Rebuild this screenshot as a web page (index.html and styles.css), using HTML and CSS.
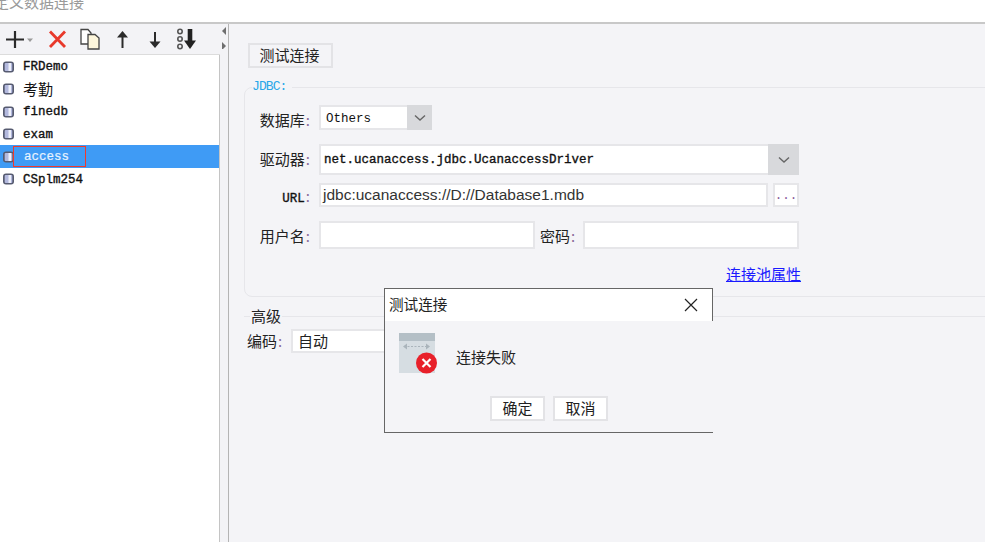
FILE: index.html
```html
<!DOCTYPE html>
<html lang="zh-CN">
<head>
<meta charset="utf-8">
<title>定义数据连接</title>
<link rel="stylesheet" href="styles.css">
</head>
<body>
<svg class="defs" width="0" height="0" aria-hidden="true">
  <symbol id="db" viewBox="0 0 11 12">
    <rect x="0" y="0.5" width="11" height="11" rx="3" fill="#565b70"/>
    <rect x="1.7" y="2" width="7.6" height="8" rx="1" fill="#b3b9de"/>
    <rect x="5.5" y="2" width="2.5" height="8" fill="#eef0fa"/>
  </symbol>
</svg>
<header class="titlebar"><span class="titletext">定义数据连接</span></header>
<main class="main">
  <aside class="sidebar">
    <div class="toolbar">
      <svg class="tools" width="204" height="24" viewBox="0 0 204 24">
        <path d="M6 11.5H24M15 3V20" stroke="#2b2b2b" stroke-width="2.2" fill="none"/>
        <path d="M27 10.5H33L30 14Z" fill="#9a9a9a"/>
        <path d="M50 3.5L65 19M65 3.5L50 19" stroke="#e8392b" stroke-width="2.8" fill="none"/>
        <path d="M81 1.5H88L91 5V16H81Z" fill="#fff" stroke="#444" stroke-width="1.3"/>
        <path d="M88 6.5H95L99 10V21H88Z" fill="#fdf6dc" stroke="#444" stroke-width="1.3"/>
        <path d="M122.5 20V6" stroke="#2b2b2b" stroke-width="2" fill="none"/>
        <path d="M117 9.5L122.5 3L128 9.5Z" fill="#2b2b2b"/>
        <path d="M155 4V17" stroke="#2b2b2b" stroke-width="2" fill="none"/>
        <path d="M149.5 13.5L155 20L160.5 13.5Z" fill="#2b2b2b"/>
        <circle cx="180" cy="3.5" r="2.2" fill="none" stroke="#555" stroke-width="1.6"/>
        <circle cx="180" cy="11" r="2.2" fill="none" stroke="#555" stroke-width="1.6"/>
        <circle cx="180" cy="18.5" r="2.2" fill="none" stroke="#555" stroke-width="1.6"/>
        <path d="M190 1V15" stroke="#222" stroke-width="4.6" fill="none"/>
        <path d="M184 12.5H196L190 21Z" fill="#222"/>
      </svg>
    </div>
    <ul class="list">
      <li class="item"><svg class="dbicon"><use href="#db"/></svg><span>FRDemo</span></li>
      <li class="item"><svg class="dbicon"><use href="#db"/></svg><span class="cjk">考勤</span></li>
      <li class="item"><svg class="dbicon"><use href="#db"/></svg><span>finedb</span></li>
      <li class="item"><svg class="dbicon"><use href="#db"/></svg><span>exam</span></li>
      <li class="item selected"><svg class="dbicon"><use href="#db"/></svg><span class="focus">access</span></li>
      <li class="item"><svg class="dbicon"><use href="#db"/></svg><span>CSplm254</span></li>
    </ul>
  </aside>
  <div class="splitter">
    <svg width="8" height="24" viewBox="0 0 8 24"><path d="M6 2V10L2 6Z" fill="#6f6f6f"/><path d="M2 17V25L6 21Z" fill="#6f6f6f"/></svg>
  </div>
  <section class="content">
    <button class="btn test">测试连接</button>
    <fieldset class="jdbc">
      <legend class="jdbc-legend">JDBC:</legend>
      <div class="row row-db">
        <label class="label label-db">数据库<i>:</i></label>
        <div class="combo combo-db"><span class="value mono drop">Others</span><span class="arrow"><svg width="14" height="8" viewBox="0 0 14 8"><path d="M2 1.5L7 6L12 1.5" stroke="#666" stroke-width="1.4" fill="none"/></svg></span></div>
      </div>
      <div class="row row-driver">
        <label class="label label-driver">驱动器<i>:</i></label>
        <div class="combo combo-driver"><span class="value mono strong">net.ucanaccess.jdbc.UcanaccessDriver</span><span class="arrow arrow-wide"><svg width="14" height="8" viewBox="0 0 14 8"><path d="M2 1.5L7 6L12 1.5" stroke="#666" stroke-width="1.4" fill="none"/></svg></span></div>
      </div>
      <div class="row row-url">
        <label class="label"><span class="mono strong">URL</span><i>:</i></label>
        <div class="input input-url"><span class="sans">jdbc:ucanaccess://D://Database1.mdb</span></div>
        <div class="input dots">...</div>
      </div>
      <div class="row row-user">
        <label class="label">用户名<i>:</i></label>
        <div class="input input-half"></div>
        <label class="label-inline">密码<i>:</i></label>
        <div class="input input-half"></div>
      </div>
      <div class="linkrow"><a class="link" href="#">连接池属性</a></div>
    </fieldset>
    <fieldset class="advanced">
      <legend class="adv-legend">高级</legend>
      <div class="row row-enc">
        <label class="label-inline">编码<i>:</i></label>
        <div class="input input-enc"><span class="enc-value">自动</span></div>
      </div>
    </fieldset>
  </section>
</main>
<div class="dialog">
  <div class="dialog-title"><span class="dialog-caption">测试连接</span>
    <svg width="14" height="14" viewBox="0 0 14 14"><path d="M1 1L13 13M13 1L1 13" stroke="#222" stroke-width="1.2" fill="none"/></svg>
  </div>
  <div class="dialog-body">
    <div class="message">
      <svg width="39" height="42" viewBox="0 0 39 42">
        <rect x="0" y="0" width="36" height="40" fill="#d6dde2"/>
        <rect x="0" y="0" width="36" height="8" fill="#b4bfc6"/>
        <path d="M5 13.5H30" stroke="#aab4bb" stroke-width="1.2" stroke-dasharray="2 1.5"/>
        <path d="M8 10.5L4 13.5L8 16.5ZM27 10.5L31 13.5L27 16.5Z" fill="#aab4bb"/>
        <circle cx="27.5" cy="30" r="10.5" fill="#e8202a"/>
        <path d="M23.5 26L31.5 34M31.5 26L23.5 34" stroke="#fff" stroke-width="2.2"/>
      </svg>
      <span class="message-text">连接失败</span>
    </div>
    <div class="actions">
      <button class="btn dlg">确定</button>
      <button class="btn dlg">取消</button>
    </div>
  </div>
</div>
</body>
</html>
```
FILE: styles.css
```css
* { box-sizing: border-box; }
html, body { margin: 0; height: 542px; overflow: hidden; }
body {
  background: #fff;
  color: #222;
  font-family: "Noto Sans CJK SC", "Liberation Sans", sans-serif;
  font-size: 15px;
  display: flex;
  flex-direction: column;
  position: relative;
}
.defs { position: absolute; }
.titlebar {
  height: 24px;
  flex: none;
  background: #fff;
  border-bottom: 2px solid #c8c8c8;
  overflow: hidden;
}
.titletext {
  display: block;
  margin: -8px 0 0 -6px;
  line-height: 20px;
  color: #9a9a9a;
  font-size: 15px;
}
.main { flex: 1; display: flex; min-height: 0; }
.sidebar {
  width: 220px;
  flex: none;
  display: flex;
  flex-direction: column;
  background: #fff;
  border-right: 1px solid #c4c4c4;
}
.toolbar {
  height: 31px;
  flex: none;
  background: #f3f3f6;
  border-bottom: 1px solid #dcdcdc;
  padding-top: 4px;
  margin-right: -1px;
}
.tools { display: block; }
.list { list-style: none; margin: 0; padding: 0; }
.item {
  height: 22.5px;
  display: flex;
  align-items: center;
  padding: 2px 0 0 3px;
  font: 12.5px/1 "Liberation Mono", monospace;
  color: #111;
  -webkit-text-stroke: 0.35px #111;
}
.dbicon { width: 11px; height: 12px; flex: none; margin: -1px 9px 0 0; }
.cjk { font: 15px/1 "Noto Sans CJK SC", sans-serif; margin-top: -3px; -webkit-text-stroke: 0; }
.selected { background: #3f9bf5; color: #e8f3ff; position: relative; -webkit-text-stroke: 0.2px #e8f3ff; }
.focus {
  position: absolute;
  left: 13px;
  top: 1px;
  width: 73px;
  height: 21px;
  line-height: 22px;
  padding-left: 11px;
  box-shadow: inset 0 0 0 1px #f03a2c;
}
.splitter {
  width: 9px;
  flex: none;
  background: #f3f3f6;
  border-right: 1px solid #b4b4b4;
  padding-top: 1px;
}
.splitter svg { display: block; }
.content {
  flex: 1;
  min-width: 0;
  background: #f4f4f7;
  padding: 19px 0 0 15px;
}
.btn {
  font: 15px/1 "Noto Sans CJK SC", sans-serif;
  color: #222;
  padding: 0 0 2px;
  border: 2px solid #e3e3e6;
  background: #fff;
}
.test {
  display: block;
  width: 85px;
  height: 25px;
  margin-left: 4px;
  padding-right: 2px;
  background: #f4f4f7;
}
.jdbc {
  margin: 11px -20px 0 0;
  padding: 10px 0 0;
  height: 218px;
  border: 1px solid #e6e6ea;
  border-radius: 8px;
  min-width: 0;
}
.jdbc-legend {
  margin-left: 7px;
  padding: 0 5px 0 0;
  height: 16px;
  font: 13px/16px "Liberation Mono", monospace;
  letter-spacing: -0.9px;
  color: #2aa7e8;
}
.row { display: flex; align-items: center; }
.label {
  width: 74px;
  flex: none;
  padding-right: 9px;
  text-align: right;
  white-space: nowrap;
}
.label-db { padding-top: 3px; }
.label-driver { padding-bottom: 2px; }
.label i, .label-inline i { font-style: normal; color: #8a6a9a; margin-left: 1px; }
.label-inline { white-space: nowrap; }
.combo, .input { background: #fff; border: 2px solid #e6e6e9; display: flex; align-items: center; }
.combo { border-right: 0; position: relative; }
.row-db { height: 25px; }
.combo-db { width: 113px; height: 25px; }
.row-driver { height: 31px; margin-top: 14px; }
.combo-driver { width: 480px; height: 31px; }
.value { flex: 1; padding-left: 3px; padding-top: 2px; white-space: nowrap; }
.drop { padding-left: 5px; padding-top: 3px; }
.mono { font: 12.5px/1 "Liberation Mono", monospace; color: #111; }
.strong { -webkit-text-stroke: 0.35px #111; }
.arrow {
  width: 25px;
  align-self: stretch;
  margin: -2px 0;
  background: #d8d9dc;
  display: flex;
  align-items: center;
  justify-content: center;
}
.arrow-wide { width: 31px; }
.row-url { height: 24px; margin-top: 8px; }
.input-url { width: 449px; height: 24px; padding-left: 2px; }
.sans { font: 15.5px/1 "Liberation Sans", sans-serif; color: #333; white-space: nowrap; }
.dots {
  width: 26px;
  height: 24px;
  margin-left: 5px;
  padding-top: 3px;
  justify-content: center;
  font: 12.5px/1 "Liberation Mono", monospace;
  color: #8a5a9a;
}
.row-user { height: 28px; margin-top: 14px; }
.input-half { width: 216px; height: 28px; }
.row-user .label-inline { width: 48px; padding-left: 5px; }
.linkrow { display: flex; justify-content: flex-end; margin: 14px 0 0; width: 556px; }
.link { color: #1a1aff; font-size: 15px; line-height: 22px; }
.advanced {
  margin: 11px -20px 0 0;
  padding: 5px 0 0;
  border: 0;
  border-top: 1px solid #e6e6ea;
  min-width: 0;
}
.adv-legend { margin-left: 6px; padding: 0 1px; height: 16px; font-size: 15px; line-height: 16px; }
.row-enc { padding-left: 3px; }
.row-enc .label-inline { width: 44px; padding-bottom: 2px; }
.input-enc { width: 200px; height: 24px; padding: 0 0 2px 5px; }
.enc-value { font-size: 15px; }
.dialog {
  position: absolute;
  left: 384px;
  top: 288px;
  width: 329px;
  height: 145px;
  display: flex;
  flex-direction: column;
  background: #f4f4f7;
  border: 1px solid #666;
  border-right: 0;
}
.dialog-title {
  height: 32px;
  flex: none;
  background: #fff;
  border-right: 1px solid #666;
  padding: 0 14px 0 4px;
  display: flex;
  align-items: center;
  justify-content: space-between;
  font-size: 14.6px;
}
.dialog-caption { margin-top: -3px; }
.dialog-body { flex: 1; padding-top: 12px; }
.message { display: flex; height: 40px; padding-left: 14px; }
.message-text { margin: 14px 0 0 18px; line-height: 20px; font-size: 15px; }
.actions { display: flex; justify-content: center; gap: 8px; margin-top: 23px; }
.dlg { width: 55px; height: 25px; }
```
